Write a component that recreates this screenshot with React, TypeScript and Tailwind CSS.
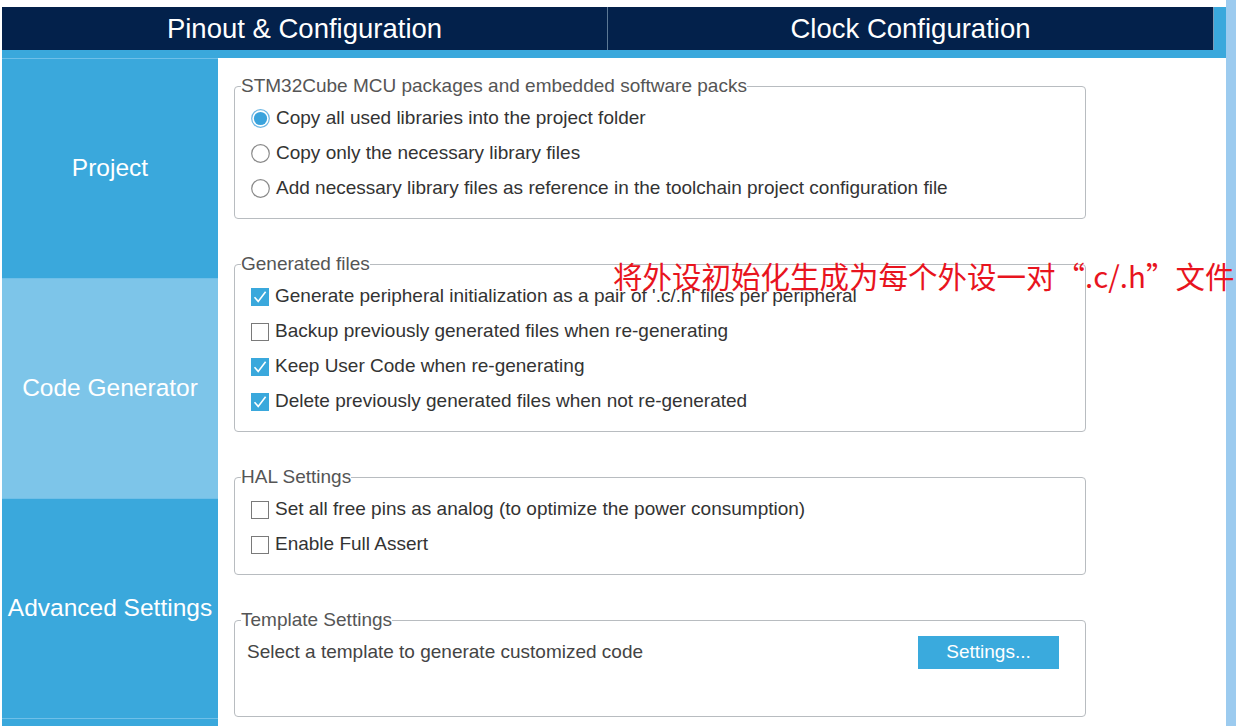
import React from "react";

const sans = { fontFamily: '"Liberation Sans", Arial, sans-serif' };

function Radio({ checked }: { checked?: boolean }) {
  return (
    <svg width="19" height="19" viewBox="0 0 19 19" className="shrink-0">
      <circle cx="9.5" cy="9.5" r="8.8" fill="#fff" stroke={checked ? "#6fb8e4" : "#8a8a8a"} strokeWidth="1.2" />
      {checked && <circle cx="9.5" cy="9.5" r="6.6" fill="#3aa3dc" />}
    </svg>
  );
}

function Check({ checked }: { checked?: boolean }) {
  if (!checked)
    return <span className="block h-[18px] w-[18px] shrink-0 border border-[#7a7a7a] bg-white" />;
  return (
    <svg width="18" height="18" viewBox="0 0 18 18" className="shrink-0">
      <rect width="18" height="18" fill="#3aa8dc" />
      <path d="M3.5 9.2 L7.2 13.4 L14.6 3.8" fill="none" stroke="#fff" strokeWidth="1.6" />
    </svg>
  );
}

function Group({
  title,
  className,
  children,
}: {
  title: string;
  className?: string;
  children: React.ReactNode;
}) {
  return (
    <fieldset
      className={`w-[852px] rounded-[4px] border border-[#b8bcc0] pl-[6px] pt-[5px] ${className ?? ""}`}
    >
      <legend className="text-[19px] leading-[20px] text-[#555]">{title}</legend>
      {children}
    </fieldset>
  );
}

function Row({ children }: { children: React.ReactNode }) {
  return (
    <div className="flex h-[35px] items-center gap-[6px] pl-[10px] text-[19px] text-[#333]">
      {children}
    </div>
  );
}

const sections = [
  { label: "Project", bg: "bg-[#3aa8dc]" },
  { label: "Code Generator", bg: "bg-[#7dc5e9]" },
  { label: "Advanced Settings", bg: "bg-[#3aa8dc]" },
];

export default function App() {
  return (
    <div className="relative flex h-[726px] w-[1236px] overflow-hidden bg-white" style={sans}>
      <div className="flex flex-1 flex-col pl-[2px] pt-[7px]">
        {/* tab bar */}
        <div className="bg-[#3aa8dc] pb-[8px] pr-[12px]">
          <div className="flex h-[43px] bg-[#03214b] text-[27.5px] text-white">
            <div className="flex w-[606px] items-center justify-center border-r border-[#5c7894]">
              Pinout &amp; Configuration
            </div>
            <div className="flex flex-1 items-center justify-center border-r border-[#7d9ab4]">
              Clock Configuration
            </div>
          </div>
        </div>

        <div className="flex flex-1">
          {/* side navigation */}
          <div className="flex w-[216px] flex-col bg-[#3aa8dc]">
            {sections.map((s) => (
              <div
                key={s.label}
                className={`flex h-[220px] items-center justify-center border-t border-[#6fbfe8] text-[24.5px] text-white ${s.bg}`}
              >
                {s.label}
              </div>
            ))}
            <div className="border-t border-[#6fbfe8]" />
          </div>

          {/* settings */}
          <div className="flex flex-1 flex-col pl-[16px]">
            <Group title="STM32Cube MCU packages and embedded software packs" className="mt-[18px] pb-[12px]">
              <Row>
                <Radio checked />
                Copy all used libraries into the project folder
              </Row>
              <Row>
                <Radio />
                Copy only the necessary library files
              </Row>
              <Row>
                <Radio />
                Add necessary library files as reference in the toolchain project configuration file
              </Row>
            </Group>

            <Group title="Generated files" className="mt-[35px] pb-[12px]">
              <Row>
                <Check checked />
                Generate peripheral initialization as a pair of '.c/.h' files per peripheral
              </Row>
              <Row>
                <Check />
                Backup previously generated files when re-generating
              </Row>
              <Row>
                <Check checked />
                Keep User Code when re-generating
              </Row>
              <Row>
                <Check checked />
                Delete previously generated files when not re-generated
              </Row>
            </Group>

            <Group title="HAL Settings" className="mt-[35px] pb-[12px]">
              <Row>
                <Check />
                Set all free pins as analog (to optimize the power consumption)
              </Row>
              <Row>
                <Check />
                Enable Full Assert
              </Row>
            </Group>

            <Group title="Template Settings" className="mt-[35px] pb-[46px]">
              <div className="flex h-[35px] items-center justify-between pl-[6px] pr-[26px] text-[19px] text-[#444]">
                <span>Select a template to generate customized code</span>
                <button className="h-[33px] w-[141px] bg-[#3aaadd] text-[19px] text-white">
                  Settings...
                </button>
              </div>
            </Group>
          </div>
        </div>
      </div>

      {/* scroll track */}
      <div className="w-[10px] bg-[#9ccbef]" />

      {/* annotation */}
      <div
        className="absolute left-[613px] top-[257px] whitespace-nowrap text-[29.5px] leading-[36px] text-[#e8141e]"
        style={{ fontFamily: '"Noto Sans CJK SC", sans-serif' }}
      >
        将外设初始化生成为每个外设一对“.c/.h”文件
      </div>
    </div>
  );
}
